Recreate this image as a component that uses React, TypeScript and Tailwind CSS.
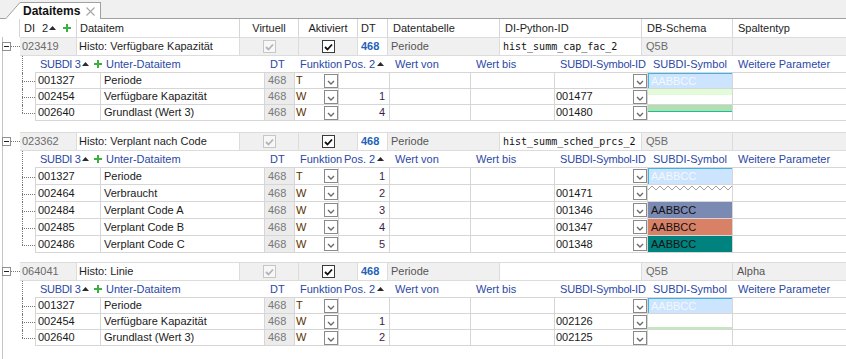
import React from "react";

type Sym = "blue" | "green1" | "green2" | "zigzag" | "slate" | "salmon" | "teal" | "greenline" | "none";

interface SubRow {
  id: string;
  name: string;
  fn: string;
  pos: string;
  symId: string;
  sym: Sym;
}

interface Group {
  id: string;
  name: string;
  py: string;
  typ: string;
  rowH: string;
  mb: string;
  rows: SubRow[];
}

const groups: Group[] = [
  {
    id: "023419",
    name: "Histo: Verfügbare Kapazität",
    py: "hist_summ_cap_fac_2",
    typ: "",
    rowH: "h-[16px]",
    mb: "mb-[11px]",
    rows: [
      { id: "001327", name: "Periode", fn: "T", pos: "", symId: "", sym: "blue" },
      { id: "002454", name: "Verfügbare Kapazität", fn: "W", pos: "1", symId: "001477", sym: "green1" },
      { id: "002640", name: "Grundlast (Wert 3)", fn: "W", pos: "4", symId: "001480", sym: "green2" },
    ],
  },
  {
    id: "023362",
    name: "Histo: Verplant nach Code",
    py: "hist_summ_sched_prcs_2",
    typ: "",
    rowH: "h-[17px]",
    mb: "mb-[9px]",
    rows: [
      { id: "001327", name: "Periode", fn: "T", pos: "1", symId: "", sym: "blue" },
      { id: "002464", name: "Verbraucht", fn: "W", pos: "2", symId: "001471", sym: "zigzag" },
      { id: "002484", name: "Verplant Code A", fn: "W", pos: "3", symId: "001346", sym: "slate" },
      { id: "002485", name: "Verplant Code B", fn: "W", pos: "4", symId: "001347", sym: "salmon" },
      { id: "002486", name: "Verplant Code C", fn: "W", pos: "5", symId: "001348", sym: "teal" },
    ],
  },
  {
    id: "064041",
    name: "Histo: Linie",
    py: "",
    typ: "Alpha",
    rowH: "h-[16px]",
    mb: "mb-0",
    rows: [
      { id: "001327", name: "Periode", fn: "T", pos: "", symId: "", sym: "blue" },
      { id: "002454", name: "Verfügbare Kapazität", fn: "W", pos: "1", symId: "002126", sym: "greenline" },
      { id: "002640", name: "Grundlast (Wert 3)", fn: "W", pos: "2", symId: "002125", sym: "none" },
    ],
  },
];

// zigzag for the "Verbraucht" line symbol
let zig = "";
for (let x = 0; x <= 84; x += 4) zig += `${x},${(x / 4) % 2 ? 1 : 5} `;

const Tri = () => (
  <svg width="7" height="4" viewBox="0 0 7 4" className="block">
    <path d="M0 4 L3.5 0 L7 4 Z" fill="#2a2a2a" />
  </svg>
);

const Plus = () => (
  <svg width="8" height="8" viewBox="0 0 8 8" className="block">
    <path d="M3 0h2v3h3v2H5v3H3V5H0V3h3z" fill="#3cb043" />
  </svg>
);

const Drop = () => (
  <div className="w-[14px] h-[14px] shrink-0 border border-[#8a8a8a] bg-white flex items-end justify-center pb-[2px]">
    <svg width="8" height="5" viewBox="0 0 8 5" className="block">
      <path d="M1 1 L4 4 L7 1" stroke="#6a6a6a" strokeWidth="1.4" fill="none" />
    </svg>
  </div>
);

const Check = ({ disabled }: { disabled?: boolean }) => (
  <div
    className={`w-[13px] h-[13px] border flex items-center justify-center ${
      disabled ? "border-[#c6c6c6] bg-[#f7f7f7]" : "border-[#3a3a3a] bg-white"
    }`}
  >
    <svg width="9" height="8" viewBox="0 0 9 8" className="block">
      <path d="M1 4 L3.5 6.5 L8 1.5" stroke={disabled ? "#b4b4b4" : "#111"} strokeWidth="1.8" fill="none" />
    </svg>
  </div>
);

function Symbol({ s }: { s: Sym }) {
  switch (s) {
    case "blue":
      return (
        <div className="h-full bg-[#cce4fe] border-t border-l border-[#3fb3e6] pl-[2px] flex items-center text-[#f3f8ff]">
          AABBCC
        </div>
      );
    case "green1":
      return <div className="h-[6px] bg-[#e2fbd9]" />;
    case "green2":
      return <div className="h-[7px] bg-[#b2dfb2] border-b border-[#14c29a]" />;
    case "zigzag":
      return (
        <svg width="84" height="6" className="block">
          <polyline points={zig} fill="none" stroke="#9c9c9c" />
        </svg>
      );
    case "slate":
      return <div className="h-full bg-[#7a8ab2] pl-[3px] flex items-center text-[#111]">AABBCC</div>;
    case "salmon":
      return <div className="h-full bg-[#d98166] pl-[3px] flex items-center text-[#111]">AABBCC</div>;
    case "teal":
      return <div className="h-full bg-[#00827e] pl-[3px] flex items-center text-[#111]">AABBCC</div>;
    case "greenline":
      return (
        <div className="h-full flex flex-col justify-end">
          <div className="h-[2px] bg-[#c4e8bd]" />
        </div>
      );
    default:
      return null;
  }
}

const TreeCell = ({ branch, last }: { branch?: boolean; last?: boolean }) => (
  <div className="w-[32px] relative shrink-0">
    <div className={`absolute left-[19px] top-0 border-l border-dotted border-[#777] ${last ? "h-1/2" : "bottom-0"}`} />
    {branch && <div className="absolute left-[19px] right-0 top-1/2 border-t border-dotted border-[#777]" />}
  </div>
);

const hc = "h-full shrink-0 border-r border-[#d6d6d6] flex items-center";
const gc = "h-full shrink-0 border-t border-b border-r border-[#dcdcdc] flex items-center";
const sc = "h-full shrink-0 border-b border-r border-[#d6d6d6] flex items-center";
const shc = "h-full shrink-0 border-b border-[#d6d6d6] flex items-center pl-[5px] text-[#2b48a6]";

function GroupBlock({ g }: { g: Group }) {
  return (
    <div className={g.mb}>
      <div className="flex h-[19px]">
        <div className="w-[17px] shrink-0 flex items-center">
          <div className="-ml-px w-[9px] h-[9px] shrink-0 border border-[#8f8f8f] bg-white flex items-center justify-center">
            <div className="w-[5px] h-px bg-[#222]" />
          </div>
          <div className="flex-1 border-t border-dotted border-[#777]" />
        </div>
        <div className={`${gc} w-[57px] bg-[#f0f0f0] pl-[2px] text-[#6b6b6b]`}>{g.id}</div>
        <div className={`${gc} w-[163px] bg-white pl-[2px]`}>{g.name}</div>
        <div className={`${gc} w-[59px] bg-[#f0f0f0] justify-center`}>
          <Check disabled />
        </div>
        <div className={`${gc} w-[59px] bg-[#f0f0f0] justify-center`}>
          <Check />
        </div>
        <div className={`${gc} w-[30px] bg-white pl-[3px] font-bold text-[#1f63b8]`}>468</div>
        <div className={`${gc} w-[112px] bg-[#f0f0f0] pl-[3px] text-[#555]`}>Periode</div>
        <div className={`${gc} w-[142px] bg-white pl-[3px] font-['DejaVu_Sans_Mono',monospace] text-[10px] text-[#111]`}>
          {g.py}
        </div>
        <div className={`${gc} w-[91px] bg-[#f0f0f0] pl-[4px] text-[#6b6b6b]`}>Q5B</div>
        <div className={`${gc} w-[113px] bg-[#f0f0f0] pl-[4px] text-[#555] border-r-0`}>{g.typ}</div>
      </div>

      <div className="flex h-[17px]">
        <TreeCell />
        <div className={`${shc} w-[66px]`}>
          <span className="tracking-[-0.3px]">SUBDI 3</span>
          <span className="ml-[1px]">
            <Tri />
          </span>
          <span className="ml-[5px]">
            <Plus />
          </span>
        </div>
        <div className={`${shc} w-[164px]`}>Unter-Dataitem</div>
        <div className={`${shc} w-[30px]`}>DT</div>
        <div className={`${shc} w-[44px] pl-[4px]`}>Funktion</div>
        <div className={`${shc} w-[51px]`}>
          <span>Pos. 2</span>
          <span className="ml-[2px]">
            <Tri />
          </span>
        </div>
        <div className={`${shc} w-[81px]`}>Wert von</div>
        <div className={`${shc} w-[84px]`}>Wert bis</div>
        <div className={`${shc} w-[93px] pl-[4px] tracking-[-0.2px]`}>SUBDI-Symbol-ID</div>
        <div className={`${shc} w-[85px]`}>SUBDI-Symbol</div>
        <div className={`${shc} w-[113px] pl-[4px]`}>Weitere Parameter</div>
      </div>

      {g.rows.map((r, i) => (
        <div key={r.id + i} className={`flex ${g.rowH}`}>
          <TreeCell branch last={i === g.rows.length - 1} />
          <div className={`${sc} w-[66px] border-l pl-[2px] text-[#1a1a1a]`}>{r.id}</div>
          <div className={`${sc} w-[164px] pl-[3px] text-[#1a1a1a]`}>{r.name}</div>
          <div className={`${sc} w-[30px] bg-[#ececec] pl-[3px] text-[#777]`}>468</div>
          <div className={`${sc} w-[44px] pl-[1px] text-[#5a3000]`}>
            <span>{r.fn}</span>
            <span className="ml-auto">
              <Drop />
            </span>
          </div>
          <div className={`${sc} w-[51px] justify-end pr-[4px] text-[#3c1f48]`}>{r.pos}</div>
          <div className={`${sc} w-[81px]`} />
          <div className={`${sc} w-[84px]`} />
          <div className={`${sc} w-[93px] pl-[1px] text-[#1a1a1a]`}>
            <span>{r.symId}</span>
            <span className="ml-auto">
              <Drop />
            </span>
          </div>
          <div className="h-full w-[85px] shrink-0 border-b border-r border-[#d6d6d6]">
            <Symbol s={r.sym} />
          </div>
          <div className={`${sc} w-[113px] border-r-0`} />
        </div>
      ))}
    </div>
  );
}

export default function App() {
  return (
    <div className="w-[846px] h-[359px] overflow-hidden whitespace-nowrap bg-white font-['Liberation_Sans',Arial,sans-serif] text-[11px] leading-[13px] text-[#1e1e1e]">
      {/* tab strip */}
      <div className="h-[19px] bg-[#f0f0f0] border-b border-[#a0a0a0] flex items-end pl-[5px]">
        <div className="flex items-end -mb-px h-[17px]">
          <svg width="15" height="17" viewBox="0 0 15 17" className="block">
            <path d="M0 17 L15 0.5 L15 17 Z" fill="#fff" />
            <path d="M0.5 17 L14.5 1 H15" stroke="#a0a0a0" fill="none" />
          </svg>
          <div className="h-[17px] bg-white border-t border-r border-[#a0a0a0] flex items-center pl-[3px] pr-[5px]">
            <span className="font-bold text-[12px] text-[#111]">Dataitems</span>
            <svg width="9" height="9" viewBox="0 0 9 9" className="block ml-[6px]">
              <path d="M0.5 0.5 L8.5 8.5 M8.5 0.5 L0.5 8.5" stroke="#a6a6a6" strokeWidth="1.1" />
            </svg>
          </div>
        </div>
      </div>

      {/* column header */}
      <div className="flex h-[18px] bg-white">
        <div className={`${hc} w-[20px]`} />
        <div className={`${hc} w-[57px] pl-[4px] pr-[5px]`}>
          <span>DI</span>
          <span className="ml-auto">2</span>
          <span className="ml-[1px]">
            <Tri />
          </span>
          <span className="ml-[7px]">
            <Plus />
          </span>
        </div>
        <div className={`${hc} w-[163px] pl-[3px]`}>Dataitem</div>
        <div className={`${hc} w-[59px] justify-center`}>Virtuell</div>
        <div className={`${hc} w-[59px] justify-center`}>Aktiviert</div>
        <div className={`${hc} w-[30px] pl-[3px]`}>DT</div>
        <div className={`${hc} w-[112px] pl-[5px]`}>Datentabelle</div>
        <div className={`${hc} w-[142px] pl-[5px]`}>DI-Python-ID</div>
        <div className={`${hc} w-[91px] pl-[5px]`}>DB-Schema</div>
        <div className={`${hc} w-[113px] pl-[5px] border-r-0`}>Spaltentyp</div>
      </div>

      {/* grid body */}
      <div className="ml-[2px] h-[322px] border-l border-[#c4c4c4]">
        {groups.map((g) => (
          <GroupBlock key={g.id} g={g} />
        ))}
      </div>
    </div>
  );
}
